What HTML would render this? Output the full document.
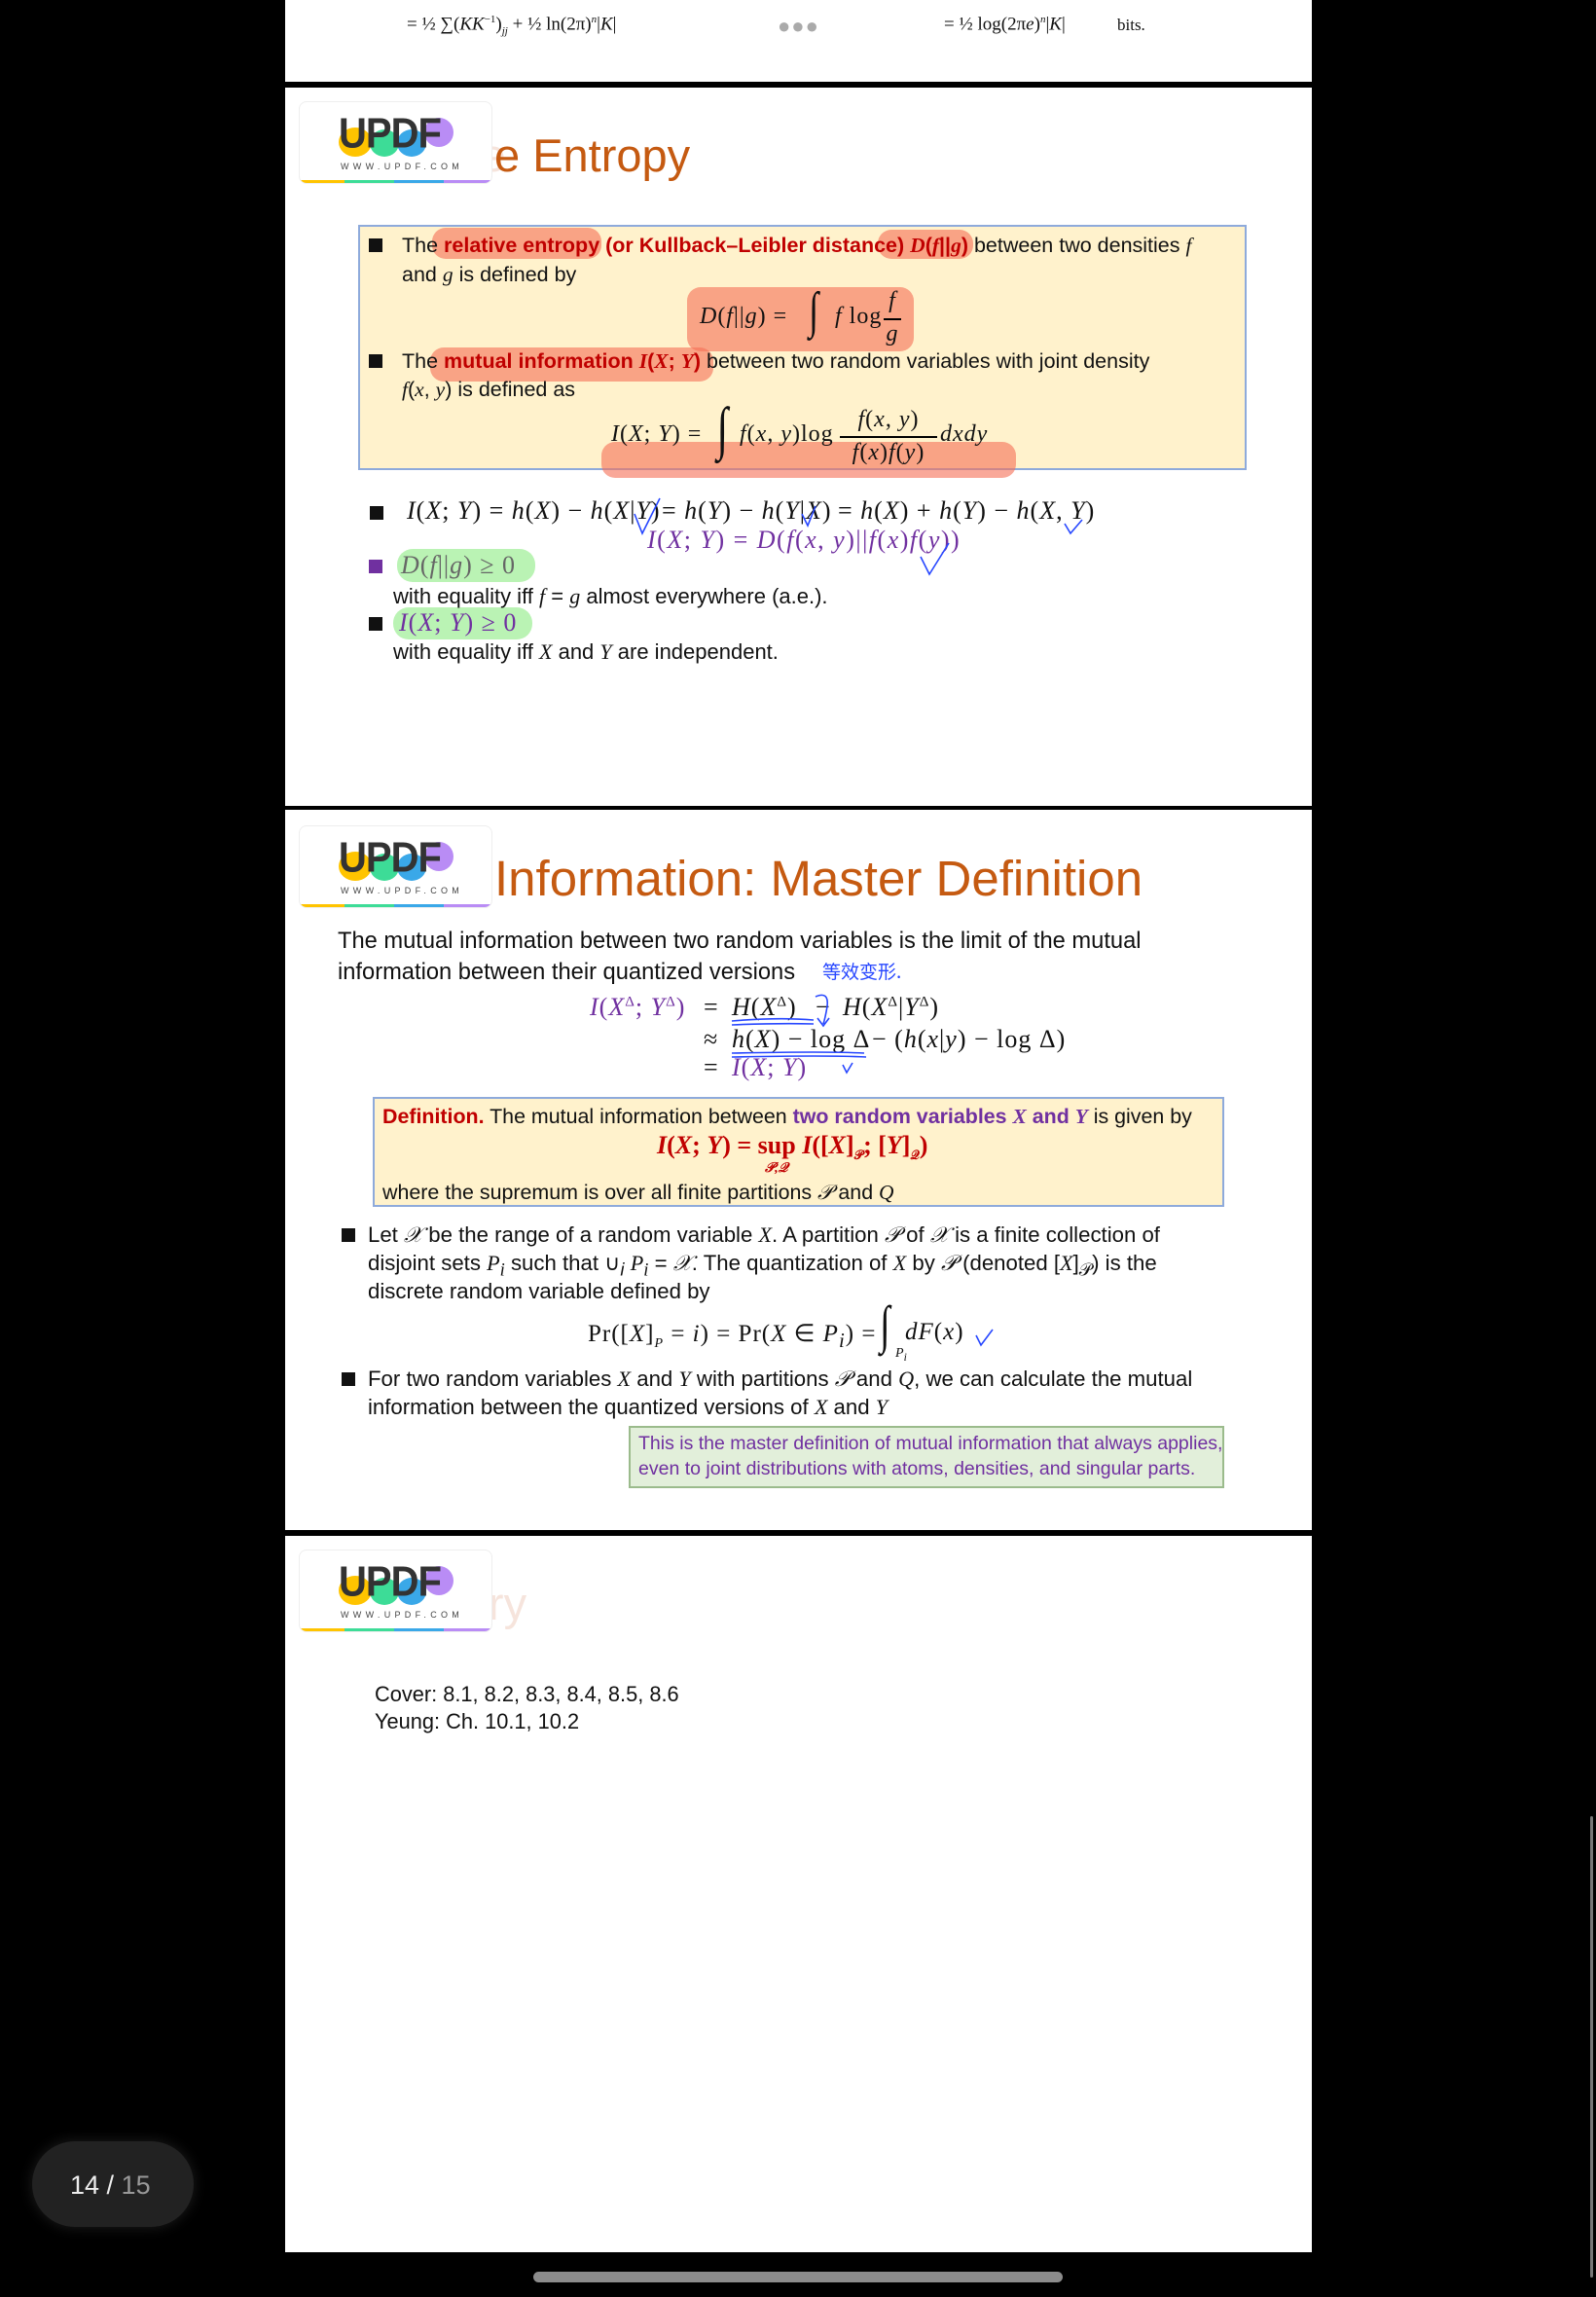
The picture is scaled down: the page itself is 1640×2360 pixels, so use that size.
<!DOCTYPE html>
<html><head><meta charset="utf-8"><style>
*{margin:0;padding:0;box-sizing:border-box}
body{width:1640px;height:2360px;background:#000;position:relative;overflow:hidden;font-family:"Liberation Sans",sans-serif;color:#111}
.pg{position:absolute;left:293px;width:1055px;background:#fff}
.a{position:absolute;white-space:nowrap}
.m{font-family:"Liberation Serif",serif;font-style:italic}
.r{font-family:"Liberation Serif",serif}
.t{font-size:21.5px}
.title{font-size:47px;color:#c55a11}
.ghost{color:#f6e4dc}
.bl{position:absolute;width:14px;height:14px;background:#111}
.hl{position:absolute;background:rgba(245,110,85,.6);border-radius:14px}
.gh{position:absolute;background:rgba(140,235,130,.6);border-radius:16px}
.logo{position:absolute;left:307px;width:199px;height:85px;background:#fff;border:1px solid #eee;border-radius:8px;overflow:hidden}
.logo .c{position:absolute;border-radius:50%}
.logo .u{position:absolute;left:40px;top:8px;font-size:40px;font-weight:900;color:#333;letter-spacing:-1px;transform:scaleY(1.1);transform-origin:top left}
.logo .w{position:absolute;left:42px;top:61px;font-size:9px;letter-spacing:4.3px;color:#444}
.logo .s{position:absolute;top:80px;height:4px}
.eq{font-family:"Liberation Serif",serif;font-size:26px;letter-spacing:1px}
</style></head><body>

<!-- page 1 fragment -->
<div class="pg" style="top:0;height:84px"></div>
<div class="a r" style="left:418px;top:14px;font-size:19px">= ½ ∑(<i>KK</i><sup style="font-size:11px">−1</sup>)<sub style="font-size:11px"><i>jj</i></sub> + ½ ln(2π)<sup style="font-size:11px"><i>n</i></sup>|<i>K</i>|</div>
<div class="a" style="left:799px;top:14px;font-size:22px;color:#aaa;letter-spacing:1px">●●●</div>
<div class="a r" style="left:970px;top:14px;font-size:19px">= ½ log(2π<i>e</i>)<sup style="font-size:11px"><i>n</i></sup>|<i>K</i>|</div>
<div class="a r" style="left:1148px;top:16px;font-size:17px">bits.</div>

<!-- page 2 -->
<div class="pg" style="top:90px;height:738px"></div>
<div class="a title ghost" style="left:350px;top:132px">Relative</div>
<div class="logo" style="top:104px">
<div class="c" style="left:40px;top:26px;width:34px;height:30px;background:#ffc400"></div>
<div class="c" style="left:72px;top:28px;width:30px;height:28px;background:#3ddc97"></div>
<div class="c" style="left:100px;top:28px;width:30px;height:28px;background:#3aa8e8"></div>
<div class="c" style="left:128px;top:16px;width:30px;height:30px;background:#b98cf5"></div>
<div class="u">UPDF</div><div class="w">WWW.UPDF.COM</div>
<div class="s" style="left:0;width:46px;background:#ffc400"></div><div class="s" style="left:46px;width:51px;background:#3ddc97"></div><div class="s" style="left:97px;width:51px;background:#3aa8e8"></div><div class="s" style="left:148px;width:51px;background:#b98cf5"></div>
</div>
<div class="a title" style="left:508px;top:132px">e&nbsp;Entropy</div>

<div class="a" style="left:368px;top:231px;width:913px;height:252px;background:#fff2cc;border:2px solid #8eaadb"></div>
<div class="hl" style="left:444px;top:234px;width:174px;height:32px"></div>
<div class="hl" style="left:902px;top:236px;width:98px;height:30px"></div>
<div class="hl" style="left:706px;top:295px;width:233px;height:66px"></div>
<div class="hl" style="left:442px;top:357px;width:291px;height:35px"></div>
<div class="hl" style="left:618px;top:454px;width:426px;height:37px"></div>
<div class="bl" style="left:379px;top:245px"></div>
<div class="a t" style="left:413px;top:240px">The <b style="color:#c00000">relative entropy (or Kullback–Leibler distance) <span class="m">D</span>(<span class="m">f</span>||<span class="m">g</span>)</b> between two densities <span class="m">f</span></div>
<div class="a t" style="left:413px;top:270px">and <span class="m">g</span> is defined by</div>
<div class="a eq" style="left:719px;top:312px;font-size:24px"><i>D</i>(<i>f</i>||<i>g</i>) =</div>
<div class="a r" style="left:829px;top:290px;font-size:52px;font-style:italic;transform:scaleX(.7)">∫</div>
<div class="a eq" style="left:858px;top:312px;font-size:24px"><i>f</i> log</div>
<div class="a eq" style="left:908px;top:292px;font-size:24px;width:18px;text-align:center;line-height:34px"><i>f</i><br><i>g</i></div>
<div class="a" style="left:908px;top:327px;width:18px;height:1.5px;background:#000"></div>
<div class="bl" style="left:379px;top:364px"></div>
<div class="a t" style="left:413px;top:359px">The <b style="color:#c00000">mutual information <span class="m">I</span>(<span class="m">X</span>; <span class="m">Y</span>)</b> between two random variables with joint density</div>
<div class="a t" style="left:413px;top:388px"><span class="m">f</span>(<span class="m">x</span>, <span class="m">y</span>) is defined as</div>
<div class="a eq" style="left:628px;top:433px;font-size:24px"><i>I</i>(<i>X</i>; <i>Y</i>) =</div>
<div class="a r" style="left:734px;top:406px;font-size:60px;font-style:italic;transform:scaleX(.7)">∫</div>
<div class="a eq" style="left:760px;top:433px;font-size:24px"><i>f</i>(<i>x</i>, <i>y</i>)log</div>
<div class="a eq" style="left:863px;top:414px;font-size:24px;text-align:center;line-height:34px;width:100px"><i>f</i>(<i>x</i>, <i>y</i>)<br><i>f</i>(<i>x</i>)<i>f</i>(<i>y</i>)</div>
<div class="a" style="left:863px;top:448px;width:100px;height:1.5px;background:#000"></div>
<div class="a eq" style="left:966px;top:433px;font-size:24px"><i>dxdy</i></div>

<div class="bl" style="left:380px;top:520px"></div>
<div class="a eq" style="left:418px;top:510px"><i>I</i>(<i>X</i>; <i>Y</i>) = <i>h</i>(<i>X</i>) − <i>h</i>(<i>X</i>|<i>Y</i>)</div>
<div class="a eq" style="left:680px;top:510px">= <i>h</i>(<i>Y</i>) − <i>h</i>(<i>Y</i>|<i>X</i>)</div>
<div class="a eq" style="left:861px;top:510px">= <i>h</i>(<i>X</i>) + <i>h</i>(<i>Y</i>) − <i>h</i>(<i>X</i>, <i>Y</i>)</div>
<div class="a eq" style="left:665px;top:540px;color:#7030a0;letter-spacing:1.5px"><i>I</i>(<i>X</i>; <i>Y</i>) = <i>D</i>(<i>f</i>(<i>x</i>, <i>y</i>)||<i>f</i>(<i>x</i>)<i>f</i>(<i>y</i>))</div>
<svg class="a" style="left:0;top:0" width="1640" height="700"><g fill="none" stroke="#2747ff" stroke-width="1.6">
<path d="M652 528 L660 548 L678 512"/><path d="M824 528 L830 540 L838 520"/><path d="M1094 538 L1100 548 L1112 534"/><path d="M946 572 L955 590 L975 558"/></g></svg>
<div class="gh" style="left:408px;top:564px;width:142px;height:34px"></div>
<div class="gh" style="left:404px;top:624px;width:143px;height:33px"></div>
<div class="a" style="left:379px;top:575px;width:14px;height:14px;background:#7030a0"></div>
<div class="a eq" style="left:412px;top:566px;color:#666"><i>D</i>(<i>f</i>||<i>g</i>) ≥ 0</div>
<div class="a" style="left:404px;top:600px;font-size:22px">with equality iff <span class="m">f</span> = <span class="m">g</span> almost everywhere (a.e.).</div>
<div class="bl" style="left:379px;top:634px"></div>
<div class="a eq" style="left:410px;top:625px;color:#7030a0"><i>I</i>(<i>X</i>; <i>Y</i>) ≥ 0</div>
<div class="a" style="left:404px;top:657px;font-size:22px">with equality iff <span class="m">X</span> and <span class="m">Y</span> are independent.</div>

<!-- page 3 -->
<div class="pg" style="top:832px;height:740px"></div>
<div class="a title ghost" style="left:350px;top:873px;font-size:51px">Mutual</div>
<div class="logo" style="top:848px">
<div class="c" style="left:40px;top:26px;width:34px;height:30px;background:#ffc400"></div>
<div class="c" style="left:72px;top:28px;width:30px;height:28px;background:#3ddc97"></div>
<div class="c" style="left:100px;top:28px;width:30px;height:28px;background:#3aa8e8"></div>
<div class="c" style="left:128px;top:16px;width:30px;height:30px;background:#b98cf5"></div>
<div class="u">UPDF</div><div class="w">WWW.UPDF.COM</div>
<div class="s" style="left:0;width:46px;background:#ffc400"></div><div class="s" style="left:46px;width:51px;background:#3ddc97"></div><div class="s" style="left:97px;width:51px;background:#3aa8e8"></div><div class="s" style="left:148px;width:51px;background:#b98cf5"></div>
</div>
<div class="a title" style="left:508px;top:873px;font-size:51px">Information: Master Definition</div>
<div class="a" style="left:347px;top:954px;font-size:23.7px">The mutual information between two random variables is the limit of the mutual</div>
<div class="a" style="left:347px;top:986px;font-size:23.7px">information between their quantized versions</div>
<div class="a" style="left:845px;top:984px;font-size:19px;color:#2747ff;font-family:'Noto Sans CJK SC',sans-serif">等效变形.</div>

<div class="a eq" style="left:606px;top:1020px;color:#7030a0"><i>I</i>(<i>X</i><sup style="font-size:15px">Δ</sup>; <i>Y</i><sup style="font-size:15px">Δ</sup>)</div>
<div class="a eq" style="left:723px;top:1020px">=</div>
<div class="a eq" style="left:752px;top:1020px"><i>H</i>(<i>X</i><sup style="font-size:15px">Δ</sup>)</div>
<div class="a eq" style="left:838px;top:1020px">−</div>
<div class="a eq" style="left:866px;top:1020px"><i>H</i>(<i>X</i><sup style="font-size:15px">Δ</sup>|<i>Y</i><sup style="font-size:15px">Δ</sup>)</div>
<div class="a eq" style="left:723px;top:1053px">≈</div>
<div class="a eq" style="left:752px;top:1053px"><i>h</i>(<i>X</i>) − log Δ</div>
<div class="a eq" style="left:896px;top:1053px">− (<i>h</i>(<i>x</i>|<i>y</i>) − log Δ)</div>
<div class="a eq" style="left:723px;top:1082px">=</div>
<div class="a eq" style="left:752px;top:1082px;color:#7030a0"><i>I</i>(<i>X</i>; <i>Y</i>)</div>
<svg class="a" style="left:0;top:0" width="1640" height="1700"><g fill="none" stroke="#2747ff" stroke-width="1.6">
<path d="M752 1049 Q800 1045 836 1048"/><path d="M752 1053 Q800 1051 836 1052"/>
<path d="M838 1024 Q852 1018 850 1034 Q848 1046 846 1052 M840 1046 L846 1054 L852 1046"/>
<path d="M752 1082 Q850 1080 888 1082"/><path d="M752 1086 Q850 1084 890 1086"/>
<path d="M866 1094 L870 1102 L876 1092"/>
<path d="M968 1176 L973 1188 L980 1172"/>
<path d="M1003 1372 L1008 1382 L1020 1366"/>
</g></svg>

<div class="a" style="left:383px;top:1127px;width:875px;height:113px;background:#fff2cc;border:2px solid #8eaadb"></div>
<div class="a" style="left:393px;top:1135px;font-size:21.4px"><b style="color:#c00000">Definition.</b> The mutual information between <b style="color:#7030a0">two random variables <i class="r">X</i> and <i class="r">Y</i></b> is given by</div>
<div class="a r" style="left:675px;top:1162px;font-size:26px;color:#c00000;font-weight:bold"><i>I</i>(<i>X</i>; <i>Y</i>) = sup <i>I</i>([<i>X</i>]<sub style="font-size:13px">𝒫</sub>; [<i>Y</i>]<sub style="font-size:13px">𝒬</sub>)</div>
<div class="a r" style="left:786px;top:1193px;font-size:14px;color:#c00000;font-weight:bold;font-style:italic">𝒫,𝒬</div>
<div class="a" style="left:393px;top:1213px;font-size:21.4px">where the supremum is over all finite partitions <span class="m">𝒫</span> and <span class="m">Q</span></div>

<div class="bl" style="left:351px;top:1262px"></div>
<div class="a" style="left:378px;top:1256px;font-size:22.2px">Let <span class="m">𝒳</span> be the range of a random variable <span class="m">X</span>. A partition <span class="m">𝒫</span> of <span class="m">𝒳</span> is a finite collection of</div>
<div class="a" style="left:378px;top:1285px;font-size:22.2px">disjoint sets <span class="m">P<sub>i</sub></span> such that ∪<sub><i>i</i></sub> <span class="m">P<sub>i</sub></span> = <span class="m">𝒳</span>. The quantization of <span class="m">X</span> by <span class="m">𝒫</span> (denoted [<span class="m">X</span>]<sub>𝒫</sub>) is the</div>
<div class="a" style="left:378px;top:1314px;font-size:22.2px">discrete random variable defined by</div>
<div class="a eq" style="left:604px;top:1355px;font-size:25px">Pr([<i>X</i>]<sub style="font-size:14px"><i>P</i></sub> = <i>i</i>) = Pr(<i>X</i> ∈ <i>P<sub>i</sub></i>) =</div>
<div class="a r" style="left:902px;top:1330px;font-size:54px;font-style:italic;transform:scaleX(.7)">∫</div>
<div class="a m" style="left:920px;top:1383px;font-size:14px"><i>P<sub>i</sub></i></div>
<div class="a eq" style="left:930px;top:1355px;font-size:25px"><i>dF</i>(<i>x</i>)</div>
<div class="bl" style="left:351px;top:1410px"></div>
<div class="a" style="left:378px;top:1404px;font-size:22.2px">For two random variables <span class="m">X</span> and <span class="m">Y</span> with partitions <span class="m">𝒫</span> and <span class="m">Q</span>, we can calculate the mutual</div>
<div class="a" style="left:378px;top:1433px;font-size:22.2px">information between the quantized versions of <span class="m">X</span> and <span class="m">Y</span></div>
<div class="a" style="left:646px;top:1465px;width:612px;height:64px;background:#e2efda;border:2px solid #9bbb8c"></div>
<div class="a" style="left:656px;top:1472px;font-size:19.5px;color:#7030a0">This is the master definition of mutual information that always applies,</div>
<div class="a" style="left:656px;top:1498px;font-size:19.5px;color:#7030a0">even to joint distributions with atoms, densities, and singular parts.</div>

<!-- page 4 -->
<div class="pg" style="top:1578px;height:736px"></div>
<div class="a title ghost" style="left:340px;top:1620px">Summary</div>
<div class="logo" style="top:1592px">
<div class="c" style="left:40px;top:26px;width:34px;height:30px;background:#ffc400"></div>
<div class="c" style="left:72px;top:28px;width:30px;height:28px;background:#3ddc97"></div>
<div class="c" style="left:100px;top:28px;width:30px;height:28px;background:#3aa8e8"></div>
<div class="c" style="left:128px;top:16px;width:30px;height:30px;background:#b98cf5"></div>
<div class="u">UPDF</div><div class="w">WWW.UPDF.COM</div>
<div class="s" style="left:0;width:46px;background:#ffc400"></div><div class="s" style="left:46px;width:51px;background:#3ddc97"></div><div class="s" style="left:97px;width:51px;background:#3aa8e8"></div><div class="s" style="left:148px;width:51px;background:#b98cf5"></div>
</div>
<div class="a" style="left:385px;top:1728px;font-size:21.8px">Cover: 8.1, 8.2, 8.3, 8.4, 8.5, 8.6</div>
<div class="a" style="left:385px;top:1756px;font-size:21.8px">Yeung: Ch. 10.1, 10.2</div>

<!-- overlays -->
<div class="a" style="left:33px;top:2200px;width:166px;height:88px;border-radius:44px;background:#222;box-shadow:0 0 14px rgba(60,60,60,.5)"></div>
<div class="a" style="left:72px;top:2230px;font-size:27px;color:#eee">14 / <span style="color:#999">15</span></div>
<div class="a" style="left:548px;top:2334px;width:544px;height:11px;border-radius:6px;background:#8c8c8c"></div>
<div class="a" style="left:1634px;top:1866px;width:3px;height:474px;border-radius:2px;background:#777"></div>
</body></html>
